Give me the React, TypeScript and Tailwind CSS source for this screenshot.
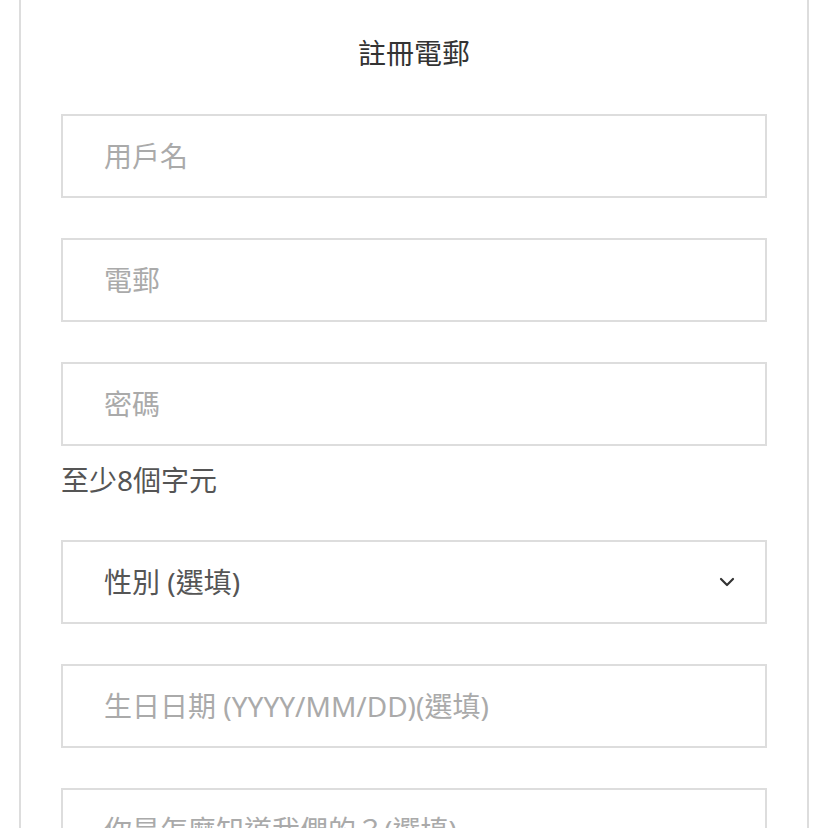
import { ChevronDown } from 'lucide-react';

const fieldClass =
  'block w-full h-[84px] border-2 border-[#dddddd] bg-white px-[41px] text-[28px] text-[#555555] placeholder:text-[#aaaaaa] outline-none';

export default function App() {
  return (
    <div
      className="min-h-screen bg-white px-[19px]"
      style={{ fontFamily: '"Noto Sans", "Noto Sans CJK TC", sans-serif' }}
    >
      <div className="border-x-2 border-[#dddddd] px-[40px] pt-[33px] pb-[40px]">
        <h1 className="h-[40px] text-center text-[28px] leading-[40px] font-normal text-[#333333]">
          註冊電郵
        </h1>

        <form className="mt-[41px] flex flex-col">
          <input type="text" placeholder="用戶名" className={fieldClass} />
          <input type="email" placeholder="電郵" className={`${fieldClass} mt-[40px]`} />
          <input type="password" placeholder="密碼" className={`${fieldClass} mt-[40px]`} />
          <p className="mt-[14px] h-[40px] text-[28px] leading-[40px] text-[#555555]">至少8個字元</p>

          {/* Gender select */}
          <div className="relative mt-[40px]">
            <select defaultValue="" className={`${fieldClass} appearance-none`}>
              <option value="">性別 (選填)</option>
              <option value="m">男</option>
              <option value="f">女</option>
            </select>
            <ChevronDown
              className="pointer-events-none absolute right-[28px] top-1/2 size-[24px] -translate-y-1/2 text-[#333333]"
              strokeWidth={2.2}
            />
          </div>

          <input type="text" placeholder="生日日期 (YYYY/MM/DD)(選填)" className={`${fieldClass} mt-[40px]`} />
          <input type="text" placeholder="你是怎麼知道我們的？(選填)" className={`${fieldClass} mt-[40px]`} />
        </form>
      </div>
    </div>
  );
}
